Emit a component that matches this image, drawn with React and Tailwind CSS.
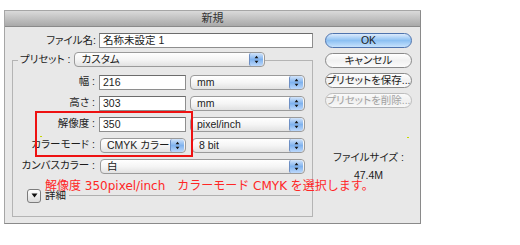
function Stepper() {
  return (
    <span className="ml-auto flex h-[13px] w-[14px] shrink-0 items-center justify-center rounded-l-[2px] rounded-r-[3px] border-l border-[#6d8fc4] bg-linear-to-b from-[#d3e4f9] via-[#7fb2ee] to-[#bcd8fb]">
      <svg width="5" height="9" viewBox="0 0 5 9">
        <path d="M2.5 0.8L4.4 3.3H0.6Z M2.5 8.2L0.6 5.7H4.4Z" fill="#151515" />
      </svg>
    </span>
  );
}

function Select({ value, className }) {
  return (
    <div
      className={`flex h-[15px] items-center rounded-[4px] border border-[#9a9a9a] bg-linear-to-b from-white via-[#f5f5f5] to-[#e2e2e2] pl-[6px] pr-px leading-[13px] ${className}`}
    >
      <span>{value}</span>
      <Stepper />
    </div>
  );
}

function Field({ value, className }) {
  return (
    <div
      className={`h-[15px] border border-[#8e8e8e] border-t-[#6c6c6c] bg-white pl-[3px] leading-[13px] ${className}`}
    >
      {value}
    </div>
  );
}

function Row({ label, children, className = '' }) {
  return (
    <div className={`flex h-[15px] items-center ${className}`}>
      <span className="w-[82px] text-right">{label}</span>
      {children}
    </div>
  );
}

export default function App() {
  return (
    <div className="h-[245px] w-[520px] bg-white pl-[4px] pt-[10px] font-['Liberation_Sans','Noto_Sans_CJK_JP',sans-serif] text-[10.5px] text-[#1c1c1c] [font-feature-settings:'palt']">
      <div className="relative flex h-[214px] w-[417px] flex-col border border-[#a6a6a6] border-r-[#8a8a8a] border-b-[#8a8a8a] bg-[#e8e8e8]">
        <div className="flex h-[16px] items-center justify-center border-b border-[#8a8a8a] bg-linear-to-b from-[#dadada] to-[#a9a9a9] text-[11px] text-[#333]">
          新規
        </div>

        <div className="flex flex-1">
          {/* left: form */}
          <div className="w-[308px]">
            <div className="mt-[6px] flex h-[15px] items-center">
              <span className="w-[91px] text-right">ファイル名:</span>
              <Field value="名称未設定 1" className="ml-[3px] w-[214px]" />
            </div>

            <div className="ml-[7px] mt-[12px] h-[157px] w-[301px] border border-[#b4b4b4]">
              <div className="-mt-[9px] ml-[5px] flex w-fit items-center bg-[#e8e8e8] pl-[2px]">
                <span>プリセット :</span>
                <Select value="カスタム" className="ml-[4px] w-[191px]" />
              </div>

              <div className="mt-[7px] flex flex-col gap-[6px]">
                <Row label="幅 :">
                  <Field value="216" className="ml-[4px] w-[87px]" />
                  <Select value="mm" className="ml-[4px] w-[115px]" />
                </Row>
                <Row label="高さ :">
                  <Field value="303" className="ml-[4px] w-[87px]" />
                  <Select value="mm" className="ml-[4px] w-[115px]" />
                </Row>
                <Row label="解像度 :">
                  <Field value="350" className="ml-[4px] w-[87px]" />
                  <Select value="pixel/inch" className="ml-[4px] w-[115px]" />
                </Row>
                <Row label="カラーモード :">
                  <Select value="CMYK カラー" className="ml-[5px] w-[86px]" />
                  <Select value="8 bit" className="ml-[6px] w-[113px]" />
                </Row>
                <Row label="カンバスカラー :">
                  <Select value="白" className="ml-[5px] w-[205px]" />
                </Row>
              </div>

              <div className="mt-[14px] flex items-center">
                <span className="ml-[14px] flex h-[14px] w-[14px] items-center justify-center rounded-[3px] border border-[#7c7c7c] bg-linear-to-b from-white to-[#dcdcdc]">
                  <svg width="7" height="5" viewBox="0 0 7 5">
                    <path d="M0.5 0.5H6.5L3.5 4.5Z" fill="#111" />
                  </svg>
                </span>
                <span className="ml-[4px]">詳細</span>
                <span className="ml-[3px] mr-[12px] h-px flex-1 bg-[#b0b0b0]" />
              </div>
            </div>
          </div>

          {/* right: buttons */}
          <div className="ml-[12px] flex w-[87px] flex-col">
            <button className="mt-[6px] h-[15px] rounded-full border border-[#4f74ae] bg-linear-to-b from-[#dcebfc] via-[#8cc0f2] to-[#c6e2fc] leading-[13px] font-medium">
              OK
            </button>
            <button className="mt-[5px] h-[15px] rounded-full border border-[#8a8a8a] bg-linear-to-b from-white via-[#f1f1f1] to-[#fbfbfb] leading-[13px]">
              キャンセル
            </button>
            <button className="mt-[5px] h-[15px] rounded-full border border-[#8a8a8a] bg-linear-to-b from-white via-[#f1f1f1] to-[#fbfbfb] leading-[13px]">
              プリセットを保存...
            </button>
            <button className="mt-[5px] h-[15px] rounded-full border border-[#bdbdbd] bg-linear-to-b from-[#fafafa] via-[#f0f0f0] to-[#f8f8f8] leading-[13px] text-[#a2a2a2]">
              プリセットを削除...
            </button>
            <div className="mt-[42px] text-center leading-[14px]">ファイルサイズ :</div>
            <div className="mt-[4px] text-center leading-[14px]">47.4M</div>
          </div>
        </div>

        {/* annotation overlays */}
        <div className="absolute left-[30px] top-[100px] h-[46px] w-[158px] border-2 border-[#ee1111]" />
        <div className="absolute left-[40px] top-[167px] whitespace-nowrap font-['DejaVu_Sans','Noto_Sans_CJK_JP',sans-serif] text-[12px] leading-[16px] text-[#ff2626] [font-feature-settings:normal]">
          解像度 350pixel/inch　カラーモード CMYK を選択します。
        </div>
        <span className="absolute left-[35px] top-[125px] h-px w-[2px] bg-[#c6d800]" />
        <span className="absolute left-[402px] top-[126px] h-px w-[2px] bg-[#c6d800]" />
      </div>
    </div>
  );
}
